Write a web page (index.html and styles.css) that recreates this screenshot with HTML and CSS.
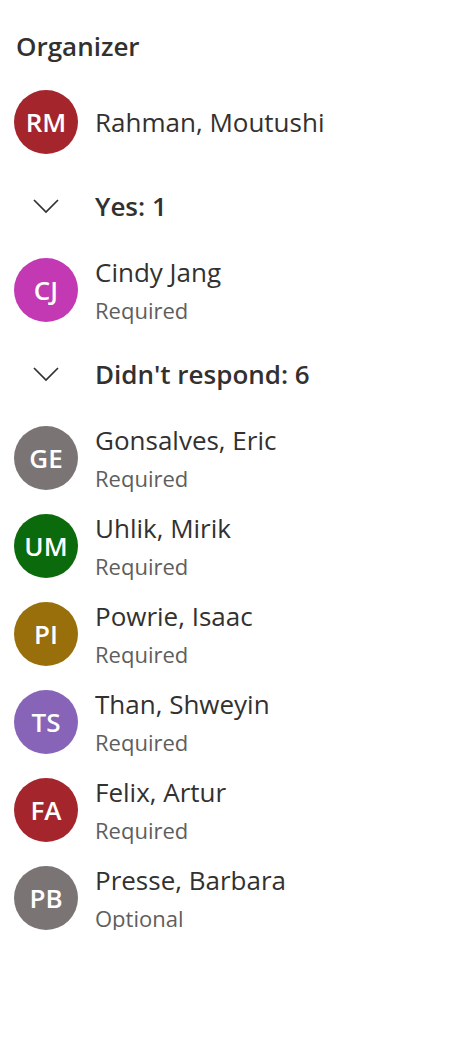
FILE: index.html
```html
<!DOCTYPE html>
<html lang="en">
<head>
<meta charset="utf-8">
<title>Attendees</title>
<link rel="stylesheet" href="styles.css">
</head>
<body>
<div class="panel">
  <div class="section-title">Organizer</div>
  <div class="person">
    <div class="avatar red">RM</div>
    <div class="info"><div class="name">Rahman, Moutushi</div></div>
  </div>

  <div class="group-header">
    <svg class="chevron" width="28" height="16" viewBox="0 0 28 16"><path d="M2 2 L14 14 L26 2" fill="none" stroke="#323130" stroke-width="1.7"/></svg>
    <span class="group-label">Yes: 1</span>
  </div>
  <div class="person">
    <div class="avatar magenta">CJ</div>
    <div class="info"><div class="name">Cindy Jang</div><div class="role">Required</div></div>
  </div>

  <div class="group-header">
    <svg class="chevron" width="28" height="16" viewBox="0 0 28 16"><path d="M2 2 L14 14 L26 2" fill="none" stroke="#323130" stroke-width="1.7"/></svg>
    <span class="group-label">Didn't respond: 6</span>
  </div>
  <div class="list">
    <div class="person">
      <div class="avatar gray">GE</div>
      <div class="info"><div class="name">Gonsalves, Eric</div><div class="role">Required</div></div>
    </div>
    <div class="person">
      <div class="avatar green">UM</div>
      <div class="info"><div class="name">Uhlik, Mirik</div><div class="role">Required</div></div>
    </div>
    <div class="person">
      <div class="avatar gold">PI</div>
      <div class="info"><div class="name">Powrie, Isaac</div><div class="role">Required</div></div>
    </div>
    <div class="person">
      <div class="avatar purple">TS</div>
      <div class="info"><div class="name">Than, Shweyin</div><div class="role">Required</div></div>
    </div>
    <div class="person">
      <div class="avatar red">FA</div>
      <div class="info"><div class="name">Felix, Artur</div><div class="role">Required</div></div>
    </div>
    <div class="person">
      <div class="avatar gray">PB</div>
      <div class="info"><div class="name">Presse, Barbara</div><div class="role">Optional</div></div>
    </div>
  </div>
</div>
</body>
</html>
```
FILE: styles.css
```css
html, body {
  margin: 0;
  padding: 0;
  background: #ffffff;
}
body {
  font-family: "Open Sans", "Noto Sans", sans-serif;
  color: #323130;
}
.panel {
  padding: 30px 0 0 14px;
}
.section-title {
  font-size: 26px;
  font-weight: 600;
  line-height: 32px;
  height: 32px;
  padding-left: 2px;
  margin-bottom: 28px;
}
.person {
  display: flex;
  align-items: center;
  gap: 17px;
  height: 64px;
}
.list {
  display: flex;
  flex-direction: column;
  gap: 24px;
}
.avatar {
  width: 64px;
  height: 64px;
  border-radius: 50%;
  flex: none;
  display: flex;
  align-items: center;
  justify-content: center;
  color: #ffffff;
  font-size: 26px;
  font-weight: 600;
}
.red { background: #a4262c; }
.magenta { background: #c239b3; }
.gray { background: #7a7574; }
.green { background: #0b6a0b; }
.gold { background: #986f0b; }
.purple { background: #8764b8; }
.info {
  display: flex;
  flex-direction: column;
}
.name {
  font-size: 26px;
  line-height: 39px;
}
.role {
  font-size: 22px;
  line-height: 36px;
  color: #605e5c;
}
.group-header {
  display: flex;
  align-items: center;
  height: 56px;
  margin: 24px 0;
  padding-left: 18px;
  gap: 35px;
}
.chevron {
  flex: none;
}
.group-label {
  font-size: 26px;
  font-weight: 600;
}
```
